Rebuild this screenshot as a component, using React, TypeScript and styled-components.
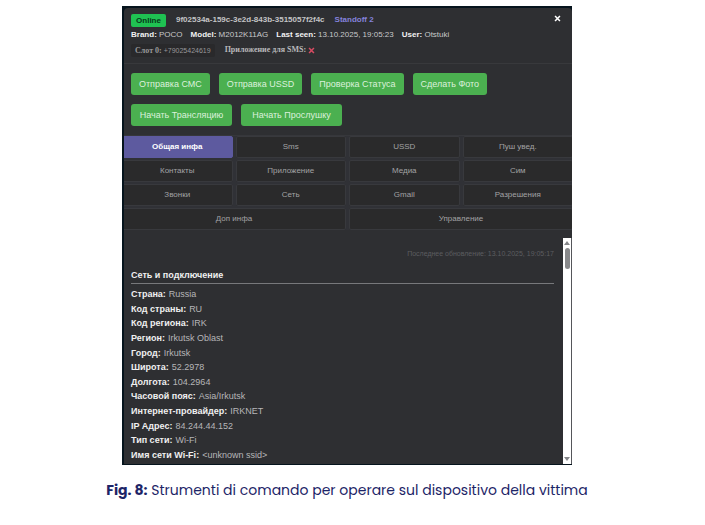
import React from "react";
import styled, { createGlobalStyle, css } from "styled-components";

const GlobalStyle = createGlobalStyle`
  *, *::before, *::after { box-sizing: border-box; }
  body { margin: 0; background: #ffffff; }
  button { font: inherit; border: 0; margin: 0; padding: 0; cursor: pointer; }
`;

const Figure = styled.figure`
  margin: 0;
  padding: 6px 11px 12px 0;
  display: flex;
  flex-direction: column;
  align-items: center;
`;

const Window = styled.section`
  width: 100%;
  max-width: 450px;
  padding: 2px 0 1px 2px;
  background: #06141d;
  font-family: "Liberation Sans", Arial, sans-serif;
  font-size: 9px;
  line-height: 14px;
  color: #c8c8ca;
`;

const Panel = styled.div`
  overflow: hidden;
  background: #2e2f32;
  border-top-left-radius: 4px;
  border-top-right-radius: 4px;
`;

const Header = styled.header`
  display: flex;
  justify-content: space-between;
  align-items: flex-start;
  padding: 5px 11px 6px 7px;
  border-bottom: 1px solid #38393c;
`;

const Details = styled.div`
  display: flex;
  flex-direction: column;
  gap: 1px;
  font-size: 8px;
`;

const Line = styled.div<{ $gap?: number }>`
  display: flex;
  align-items: center;
  gap: ${(p) => p.$gap ?? 10}px;
  white-space: nowrap;
`;

const Status = styled.span`
  width: 35px;
  line-height: 13px;
  border-radius: 2px;
  background: #1fc252;
  color: #06381a;
  font-weight: 700;
  text-align: center;
`;

const DeviceId = styled.span`
  color: #c4c4c6;
  font-weight: 700;
`;

const AppLink = styled.a`
  color: #8482dc;
  font-weight: 700;
  text-decoration: none;
`;

const Meta = styled.span`
  b { color: #f2f2f2; }
`;

const Slot = styled.span`
  padding: 0 4px;
  border-radius: 2px;
  background: #29292b;
  color: #98989a;
  font-size: 7px;
  line-height: 13px;
  b { font-family: "Liberation Serif", serif; font-size: 8px; }
`;

const SmsApp = styled.span`
  display: flex;
  align-items: center;
  gap: 2px;
  color: #b8b8ba;
  font-family: "Liberation Serif", serif;
  font-weight: 700;
`;

const CloseButton = styled.button`
  display: flex;
  padding: 2px 0;
  background: none;
  color: #ffffff;
`;

const Actions = styled.div`
  display: flex;
  flex-wrap: wrap;
  gap: 9px;
  padding: 9px 7px;
`;

const ActionButton = styled.button<{ $long?: boolean }>`
  height: 22px;
  min-width: ${(p) => (p.$long ? "101px" : "0")};
  padding: 0 8px;
  border-radius: 3px;
  background: #4bb050;
  color: #dcf0dc;
  white-space: nowrap;
`;

const Tabs = styled.nav`
  display: grid;
  grid-template-columns: repeat(4, 1fr);
  gap: 2px 3px;
  margin: 0 -1px 0 -2px;
  border-top: 1px solid #36373b;
  background: #303136;
`;

const Tab = styled.button<{ $active?: boolean; $wide?: boolean }>`
  height: 22px;
  border: 1px solid #38393d;
  border-radius: 2px;
  background: #2a2a2b;
  color: #a2a2a4;
  font-size: 8px;
  ${(p) => p.$wide && css`grid-column: span 2;`}
  ${(p) =>
    p.$active &&
    css`
      border-color: #5d5a9f;
      background: #5d5a9f;
      color: #ffffff;
      font-weight: 700;
    `}
`;

const Viewport = styled.div`
  display: flex;
  height: 226px;
  margin-top: 8px;
`;

const Content = styled.div`
  flex: 1;
  display: flex;
  flex-direction: column;
  padding: 9px 9px 2px 7px;
`;

const Updated = styled.time`
  align-self: flex-end;
  color: #5c5d60;
  font-size: 7px;
`;

const SectionTitle = styled.h2`
  margin: 7px 0 3px;
  border-bottom: 1px solid #77787b;
  color: #f0f0f0;
  font-size: 9px;
  line-height: 15px;
`;

const Facts = styled.dl`
  flex: 1;
  display: flex;
  flex-direction: column;
  justify-content: space-between;
  margin: 0;
`;

const Fact = styled.div`
  display: flex;
  gap: 3px;
  dt { color: #f0f0f0; font-weight: 700; }
  dd { margin: 0; color: #b6b6b8; }
`;

const ScrollTrack = styled.div`
  width: 9px;
  display: flex;
  flex-direction: column;
  align-items: center;
  border-right: 1px solid #55565a;
  background: #ffffff;
`;

const ScrollButton = styled.button`
  height: 10px;
  display: flex;
  align-items: center;
  background: none;
`;

const ScrollThumb = styled.div`
  width: 5px;
  height: 21px;
  margin-bottom: auto;
  border-radius: 3px;
  background: #88898b;
`;

const Caption = styled.figcaption`
  margin-top: 14px;
  color: #1d2567;
  font-family: Poppins, Inter, sans-serif;
  font-size: 14px;
  line-height: 22px;
`;

const Cross = ({ size, label }: { size: number; label?: string }) => (
  <svg width={size} height={size} viewBox="0 0 10 10" role={label ? "img" : undefined} aria-label={label}>
    <path d="M1.5 1.5 8.5 8.5M8.5 1.5 1.5 8.5" stroke="currentColor" strokeWidth="2.2" />
  </svg>
);

const Missing = styled.span`
  display: flex;
  color: #d64b62;
`;

const Arrow = ({ down }: { down?: boolean }) => (
  <svg width="6" height="4" viewBox="0 0 6 4">
    <path d={down ? "M0 0h6L3 4z" : "M3 0l3 4H0z"} fill="#858689" />
  </svg>
);

const meta = [
  ["Brand", "POCO"],
  ["Model", "M2012K11AG"],
  ["Last seen", "13.10.2025, 19:05:23"],
  ["User", "Otstuki"],
];

const actions = [
  "Отправка СМС",
  "Отправка USSD",
  "Проверка Статуса",
  "Сделать Фото",
];

const longActions = ["Начать Трансляцию", "Начать Прослушку"];

const tabs = [
  "Общая инфа", "Sms", "USSD", "Пуш увед.",
  "Контакты", "Приложение", "Медиа", "Сим",
  "Звонки", "Сеть", "Gmail", "Разрешения",
];

const wideTabs = ["Доп инфа", "Управление"];

const facts = [
  ["Страна", "Russia"],
  ["Код страны", "RU"],
  ["Код региона", "IRK"],
  ["Регион", "Irkutsk Oblast"],
  ["Город", "Irkutsk"],
  ["Широта", "52.2978"],
  ["Долгота", "104.2964"],
  ["Часовой пояс", "Asia/Irkutsk"],
  ["Интернет-провайдер", "IRKNET"],
  ["IP Адрес", "84.244.44.152"],
  ["Тип сети", "Wi-Fi"],
  ["Имя сети Wi-Fi", "<unknown ssid>"],
];

export default function App() {
  return (
    <>
      <GlobalStyle />
      <Figure>
        <Window>
          <Panel>
            <Header>
              <Details>
                <Line>
                  <Status>Online</Status>
                  <DeviceId>9f02534a-159c-3e2d-843b-3515057f2f4c</DeviceId>
                  <AppLink href="#app">Standoff 2</AppLink>
                </Line>
                <Line $gap={8}>
                  {meta.map(([name, value]) => (
                    <Meta key={name}>
                      <b>{name}:</b> {value}
                    </Meta>
                  ))}
                </Line>
                <Line>
                  <Slot>
                    <b>Слот 0:</b> +79025424619
                  </Slot>
                  <SmsApp>
                    Приложение для SMS:
                    <Missing>
                      <Cross size={7} label="нет" />
                    </Missing>
                  </SmsApp>
                </Line>
              </Details>
              <CloseButton aria-label="Закрыть">
                <Cross size={7} />
              </CloseButton>
            </Header>
            <Actions>
              {actions.map((label) => (
                <ActionButton key={label}>{label}</ActionButton>
              ))}
              {longActions.map((label) => (
                <ActionButton key={label} $long>{label}</ActionButton>
              ))}
            </Actions>
            <Tabs>
              {tabs.map((label, i) => (
                <Tab key={label} $active={i === 0}>{label}</Tab>
              ))}
              {wideTabs.map((label) => (
                <Tab key={label} $wide>{label}</Tab>
              ))}
            </Tabs>
            <Viewport>
              <Content>
                <Updated>Последнее обновление: 13.10.2025, 19:05:17</Updated>
                <SectionTitle>Сеть и подключение</SectionTitle>
                <Facts>
                  {facts.map(([name, value]) => (
                    <Fact key={name}>
                      <dt>{name}:</dt>
                      <dd>{value}</dd>
                    </Fact>
                  ))}
                </Facts>
              </Content>
              <ScrollTrack>
                <ScrollButton aria-label="Прокрутить вверх">
                  <Arrow />
                </ScrollButton>
                <ScrollThumb />
                <ScrollButton aria-label="Прокрутить вниз">
                  <Arrow down />
                </ScrollButton>
              </ScrollTrack>
            </Viewport>
          </Panel>
        </Window>
        <Caption>
          <b>Fig. 8:</b> Strumenti di comando per operare sul dispositivo della vittima
        </Caption>
      </Figure>
    </>
  );
}
